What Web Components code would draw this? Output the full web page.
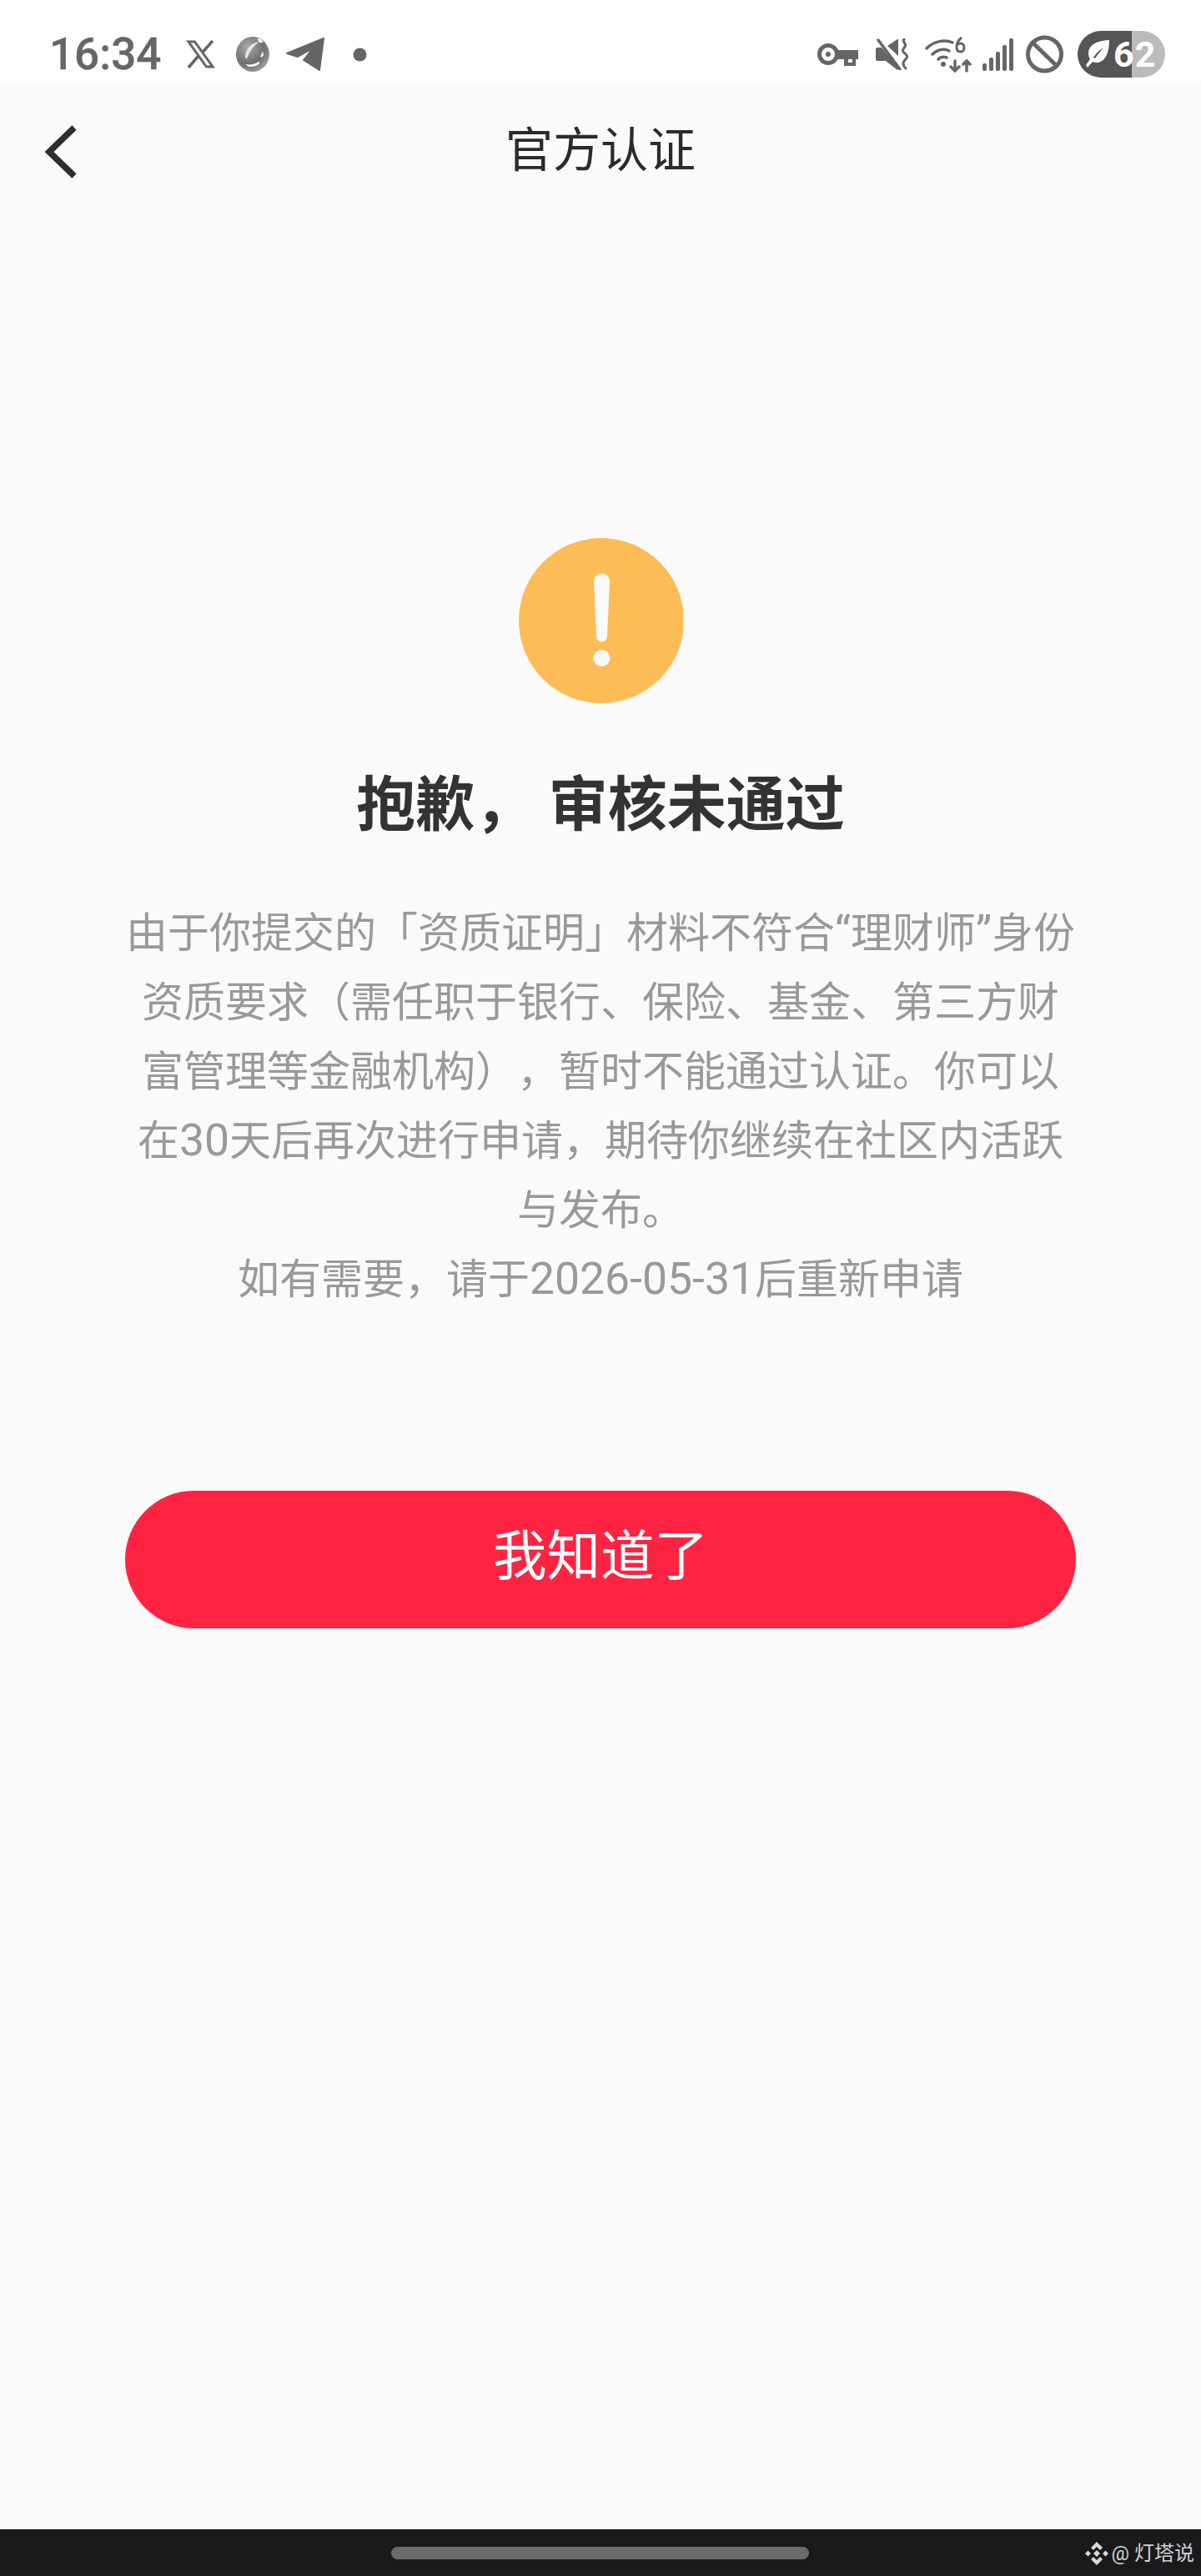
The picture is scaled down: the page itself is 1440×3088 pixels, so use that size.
<!DOCTYPE html>
<html lang="zh">
<head>
<meta charset="utf-8">
<title>官方认证</title>
<style>
  html, body { margin: 0; padding: 0; background: #fafafa; }
  body { font-family: Roboto, "Noto Sans CJK SC", sans-serif; }
  review-result span { font-size: 53.5px; line-height: 0; }
</style>
</head>
<body>
<app-page>
  <status-bar slot="top" time="16:34" level="62"></status-bar>
  <nav-bar slot="top">官方认证</nav-bar>
  <review-result title-text="抱歉， 审核未通过" action="我知道了">
    由于你提交的「资质证明」材料不符合<span>“</span>理财师<span>”</span>身份<br>
    资质要求（需任职于银行、保险、基金、第三方财<br>
    富管理等金融机构），暂时不能通过认证。你可以<br>
    在<span>30</span>天后再次进行申请，期待你继续在社区内活跃<br>
    与发布。<br>
    如有需要，请于<span>2026-05-31</span>后重新申请
  </review-result>
  <home-bar slot="bottom">@ 灯塔说</home-bar>
</app-page>

<script>
class AppPage extends HTMLElement {
  constructor() {
    super();
    const shadow = this.attachShadow({ mode: 'open' });
    shadow.innerHTML = `
    <style>
      :host { display: flex; flex-direction: column; width: 1440px; height: 3088px; background: #fafafa; overflow: hidden; }
      main { flex: 1; display: block; }
    </style>
    <slot name="top"></slot>
    <main><slot></slot></main>
    <slot name="bottom"></slot>
    `;
  }
}

class StatusBar extends HTMLElement {
  constructor() {
    super();
    const shadow = this.attachShadow({ mode: 'open' });
    shadow.innerHTML = `
    <style>
      :host { display: flex; align-items: center; height: 100px; background: #fff; color: #666; box-sizing: border-box; padding: 30px 43px 0 59px; }
      .time { font: 500 53px/1 Roboto, sans-serif; width: 133px; -webkit-text-stroke: .3px #666; white-space: nowrap; }
      svg { display: block; flex: none; }
      .left { display: flex; align-items: center; }
      .spacer { flex: 1; }
      .right { display: flex; align-items: center; }
      .battery { display: flex; align-items: center; width: 105px; height: 56px; margin-left: 17px; border-radius: 28px; color: #fff;
        background: linear-gradient(90deg, #555 65px, #bbb 65px); font: 700 43px/56px Roboto, sans-serif; letter-spacing: 1px; }
      .battery svg { margin: 0 3px 0 8px; }
    </style>
    <span class="time">${this.getAttribute('time')}</span>
    <div class="left">
      <svg style="margin-left:31px" width="35" height="34" viewBox="0 0 35 34"><path fill="none" stroke="#666" stroke-width="3" d="M3 2h7.500l21.500 30h-7.500z"/><path fill="none" stroke="#666" stroke-width="3.500" d="M32 1 20 14.500M15 19 3 33"/></svg>
      <svg style="margin-left:24px" width="42" height="42" viewBox="0 0 42 42">
        <defs><radialGradient id="g" cx=".35" cy=".3" r=".8"><stop offset="0" stop-color="#aaa"/><stop offset=".6" stop-color="#6f6f6f"/><stop offset="1" stop-color="#a5a5a5"/></radialGradient></defs>
        <ellipse cx="21" cy="21" rx="20" ry="21" fill="url(#g)"/>
        <path fill="#e8e8e8" d="M12 24c0-9 8-17 17-18-6 4-11 10-14 18-1 3-3 3-3 0z"/>
        <path fill="#fff" d="M26 2l5 1 3 4-5 0z"/>
        <path fill="#fff" d="M13 33c5 1 11 0 15-3 1 0 1 1 1 2-3 3-7 4-11 4-2 0-4-1-5-3z"/>
        <path fill="#eee" d="M30 24l3-7 1 4c0 3-2 4-4 3z"/>
      </svg>
      <svg style="margin-left:18px" width="48" height="42" viewBox="0 0 48 42"><path fill="#666" stroke="#666" stroke-width="2" stroke-linejoin="round" d="M46 2 41 40 22 28 33 14 15 24 2 20z"/></svg>
      <svg style="margin-left:33px" width="17" height="17" viewBox="0 0 17 17"><circle cx="8.500" cy="8.500" r="8" fill="#666"/></svg>
    </div>
    <div class="spacer"></div>
    <div class="right">
      <svg width="50" height="28" viewBox="0 0 50 28"><circle cx="13" cy="14" r="10.500" fill="none" stroke="#666" stroke-width="5"/><circle cx="13" cy="14" r="3" fill="#666"/><path fill="#666" d="M22 9h27v11h-3v8H32v-8h-10z"/><path fill="#fff" d="M37 20h5v4h-5z"/></svg>
      <svg style="margin-left:20px" width="40" height="38" viewBox="0 0 40 38">
        <path fill="#666" d="M0 13q0-2 2-2h5l20 24-1 3-14-11H2q-2 0-2-2zM14 9l12-8h1v20z"/>
        <path stroke="#666" stroke-width="3.500" stroke-linecap="round" d="M3 2l26 35"/>
        <path fill="none" stroke="#666" stroke-width="3" stroke-linecap="round" d="M34 1c-3 4 4 5 1 9s-4 5 0 8 3 5 0 8-3 6 1 10"/>
      </svg>
      <svg style="margin-left:19px" width="56" height="43" viewBox="0 0 56 43">
        <g fill="none" stroke="#666" stroke-width="3.500" stroke-linecap="round"><path d="M2 14C11 5 24 3 33 7"/><path d="M9 21c6-6 14-7 20-4"/><path d="M16 27c3-3 7-3 10-2"/><path d="M36 29v12M31 36l5 5 5-5M50 41V29M46 33l4-4 4 4"/></g>
        <circle cx="22" cy="33" r="3" fill="#666"/>
        <path fill="none" stroke="#666" stroke-width="3" d="M44 1c-4 3-6 7-6 11 0 4 2 6 4.500 6s4.500-2 4.500-5-2-5-4.500-5-4 1-4.500 3"/>
      </svg>
      <svg style="margin-left:13px" width="37" height="39" viewBox="0 0 37 39"><g fill="#666"><rect x="0" y="30" width="5" height="9" rx="2"/><rect x="8" y="23" width="5" height="16" rx="2"/><rect x="16" y="16" width="5" height="23" rx="2"/><rect x="24" y="8" width="5" height="31" rx="2"/><rect x="32" y="0" width="5" height="39" rx="2"/></g></svg>
      <svg style="margin-left:15px" width="45" height="46" viewBox="0 0 45 46"><circle cx="22.500" cy="23" r="20" fill="none" stroke="#666" stroke-width="5"/><path stroke="#666" stroke-width="5" d="M8 9l29 28"/></svg>
      <div class="battery"><svg width="32" height="34" viewBox="0 0 32 34"><path fill="#fff" d="M30 0C14 1 5 6 5 16c0 3 1 5 2 7L2 30l2 3 6-7c2 1 4 1 7 1C26 25 30 14 30 0zM11 21c3-5 7-9 12-12-3 4-7 8-10 13z"/></svg><span>62</span></div>
    </div>
    `;
  }
}

class NavBar extends HTMLElement {
  constructor() {
    super();
    const shadow = this.attachShadow({ mode: 'open' });
    shadow.innerHTML = `
    <style>
      :host { display: grid; grid-template-columns: 100px 1fr 100px; align-items: center; height: 160px; color: #2b2b2b; }
      button { all: unset; display: block; padding: 4px 0 0 52px; }
      svg { display: block; }
      h1 { margin: 0; padding-top: 2px; text-align: center; font: 400 57px/80px Roboto, "Noto Sans CJK SC", sans-serif; }
    </style>
    <button aria-label="返回"><svg width="44" height="66" viewBox="0 0 44 66"><path fill="none" stroke="#2e2e2e" stroke-width="7.500" d="M37 4 7 33l30 29"/></svg></button>
    <h1><slot></slot></h1>
    <span></span>
    `;
  }
}

class ReviewResult extends HTMLElement {
  constructor() {
    super();
    const shadow = this.attachShadow({ mode: 'open' });
    shadow.innerHTML = `
    <style>
      :host { display: flex; flex-direction: column; align-items: center; color: #333; }
      svg { display: block; margin: 385px 0 0 1px; }
      h2 { margin: 72px 0 0; font: 700 71px/100px Roboto, "Noto Sans CJK SC", sans-serif; color: #333; white-space: nowrap; }
      p { margin: 63px 0 0; font: 400 50px/83px Roboto, "Noto Sans CJK SC", sans-serif; color: #999; text-align: center; white-space: nowrap; text-spacing-trim: space-all; }
      button { all: unset; box-sizing: border-box; display: flex; align-items: center; justify-content: center; width: 1140px; height: 165px; padding-bottom: 6px; margin-top: 211px; border-radius: 83px; background: #ff2442; color: #fff; font: 400 64.5px/1 Roboto, "Noto Sans CJK SC", sans-serif; }
    </style>
    <svg width="197" height="198" viewBox="0 0 197 198">
      <circle cx="99" cy="99" r="99" fill="#fdbc55"/>
      <path fill="#fafafa" d="M90 52a9.500 9.500 0 0 1 19 0l-3 66a6.500 6.500 0 0 1-13 0z"/>
      <circle cx="99.500" cy="144" r="10" fill="#fafafa"/>
    </svg>
    <h2>${this.getAttribute('title-text')}</h2>
    <p><slot></slot></p>
    <button>${this.getAttribute('action')}</button>
    `;
  }
}

class HomeBar extends HTMLElement {
  constructor() {
    super();
    const shadow = this.attachShadow({ mode: 'open' });
    shadow.innerHTML = `
    <style>
      :host { display: block; position: relative; height: 56px; background: #1a1a1c; }
      .pill { position: absolute; left: 469px; top: 21px; width: 501px; height: 15px; border-radius: 8px; background: #6b6b6b; }
      .mark { position: absolute; right: 8px; top: 14px; display: flex; align-items: center; gap: 3px; color: #d2d2d2; font: 400 24px/30px Roboto, "Noto Sans CJK SC", sans-serif; white-space: nowrap; }
      svg { display: block; }
    </style>
    <div class="pill"></div>
    <div class="mark">
      <svg width="28" height="28" viewBox="0 0 28 28"><g fill="#d8d8d8"><path d="M14 0l7 7-3 3-4-4-4 4-3-3z"/><path d="M14 28l-7-7 3-3 4 4 4-4 3 3z"/><path d="M14 10l4 4-4 4-4-4z"/><path d="M3.500 10.500L7 14l-3.500 3.500L0 14zM24.500 10.500L28 14l-3.500 3.500L21 14z"/></g></svg>
      <span><slot></slot></span>
    </div>
    `;
  }
}

customElements.define('app-page', AppPage);
customElements.define('status-bar', StatusBar);
customElements.define('nav-bar', NavBar);
customElements.define('review-result', ReviewResult);
customElements.define('home-bar', HomeBar);
</script>
</body>
</html>
